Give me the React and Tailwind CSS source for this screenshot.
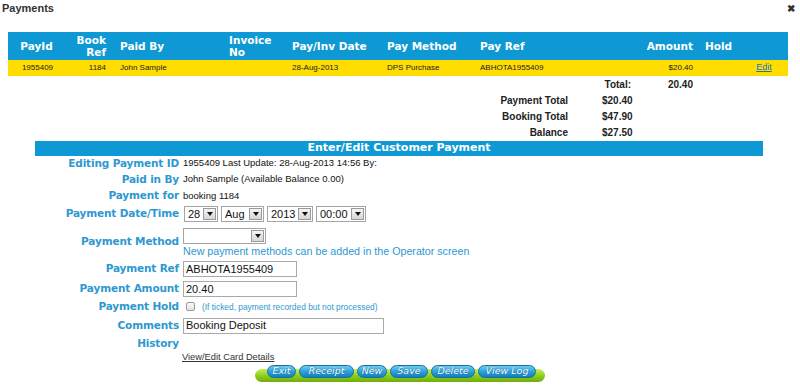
import React from 'react';

const cols = 'grid grid-cols-[57px_47px_109px_63px_95px_93px_168px_59px_41px_48px]';

const Select = ({ value, w }) => (
  <div className={`flex h-[16px] items-stretch border border-[#a5a5a5] bg-white ${w}`}>
    <div className="flex flex-1 items-center pl-[3px] text-[11px] text-[#111]">{value}</div>
    <div className="m-[1px] flex w-[13px] items-center justify-center border border-[#9a9a9a] bg-gradient-to-b from-[#f4f4f4] to-[#d6d6d6]">
      <span className="block h-0 w-0 border-x-[3.5px] border-t-[4px] border-x-transparent border-t-[#111]" />
    </div>
  </div>
);

const Input = ({ value, w }) => (
  <div className={`flex h-[16px] items-center border border-[#a9a9a9] bg-white pl-[2px] text-[11px] text-[#111] ${w}`}>
    {value}
  </div>
);

const Row = ({ label, h, children }) => (
  <div className={`flex items-center ${h}`}>
    <div className="w-[179px] shrink-0 text-right font-['DejaVu_Sans',sans-serif] text-[10.5px] font-bold tracking-[-0.15px] text-[#2e98d0]">
      {label}
    </div>
    <div className="ml-[4px] flex items-center">{children}</div>
  </div>
);

const buttons = [
  ['Exit', 'w-[29px]'],
  ['Receipt', 'w-[55px]'],
  ['New', 'w-[30px]'],
  ['Save', 'w-[38px]'],
  ['Delete', 'w-[44px]'],
  ['View Log', 'w-[58px]'],
];

export default function App() {
  return (
    <div className="relative h-[388px] w-[800px] overflow-hidden bg-white font-['Liberation_Sans',Arial,sans-serif] text-[#111]">
      {/* title */}
      <div className="flex h-[17px] items-center justify-between pl-[2px] pr-[5px]">
        <span className="text-[11px] font-bold text-[#333]">Payments</span>
        <span className="text-[10px] font-bold text-[#333]">✖</span>
      </div>

      {/* payments table */}
      <div className="mx-[8px] mt-[15px] w-[780px]">
        <div className={`${cols} h-[28px] items-center bg-[#0f99d4] font-['DejaVu_Sans',sans-serif] text-[10.5px] font-bold leading-[12px] text-white`}>
          <div className="text-center">PayId</div>
          <div className="pr-[6px] text-right">Book<br />Ref</div>
          <div className="pl-[8px]">Paid By</div>
          <div className="pl-[8px]">Invoice<br />No</div>
          <div className="pl-[8px]">Pay/Inv Date</div>
          <div className="pl-[8px]">Pay Method</div>
          <div className="pl-[8px]">Pay Ref</div>
          <div className="pr-[6px] text-right">Amount</div>
          <div className="pl-[6px]">Hold</div>
          <div />
        </div>
        <div className={`${cols} h-[16px] items-center bg-[#ffdd00] text-[8px] text-[#222]`}>
          <div className="pl-[2px] text-center">1955409</div>
          <div className="pr-[6px] text-right">1184</div>
          <div className="pl-[8px]">John Sample</div>
          <div className="pl-[8px]" />
          <div className="pl-[8px]">28-Aug-2013</div>
          <div className="pl-[8px]">DPS Purchase</div>
          <div className="pl-[8px]">ABHOTA1955409</div>
          <div className="pr-[6px] text-right">$20.40</div>
          <div />
          <div className="text-center text-[9px] text-[#1a73c8] underline">Edit</div>
        </div>
        <div className={`${cols} h-[16px] items-center text-[10px] font-bold text-[#222]`}>
          <div /><div /><div /><div /><div /><div />
          <div className="pr-[9px] text-right">Total:</div>
          <div className="pr-[6px] text-right">20.40</div>
          <div /><div />
        </div>
      </div>

      {/* totals */}
      <div className="text-[10px] font-bold text-[#222]">
        {[
          ['Payment Total', '$20.40'],
          ['Booking Total', '$47.90'],
          ['Balance', '$27.50'],
        ].map(([k, v]) => (
          <div key={k} className="flex h-[16px] items-center">
            <div className="w-[568px] text-right">{k}</div>
            <div className="pl-[34px]">{v}</div>
          </div>
        ))}
      </div>

      {/* edit form */}
      <div className="ml-[35px] mt-[1px] flex h-[15px] w-[728px] items-center justify-center bg-[#0f99d4] font-['DejaVu_Sans',sans-serif] text-[11px] font-bold text-white">
        Enter/Edit Customer Payment
      </div>

      <div className="text-[9.5px] text-[#111]">
        <Row label="Editing Payment ID" h="h-[15px]">
          1955409 Last Update: 28-Aug-2013 14:56 By:
        </Row>
        <Row label="Paid in By" h="h-[17px]">
          John Sample (Available Balance 0.00)
        </Row>
        <Row label="Payment for" h="h-[16px]">
          booking 1184
        </Row>
        <Row label="Payment Date/Time" h="h-[20px]">
          <div className="flex gap-[3px] pl-[1px]">
            <Select value="28" w="w-[34px]" />
            <Select value="Aug" w="w-[43px]" />
            <Select value="2013" w="w-[46px]" />
            <Select value="00:00" w="w-[50px]" />
          </div>
        </Row>
        <div className="flex h-[35px] items-center">
          <div className="w-[179px] shrink-0 text-right font-['DejaVu_Sans',sans-serif] text-[10.5px] font-bold tracking-[-0.15px] text-[#2e98d0]">
            Payment Method
          </div>
          <div className="ml-[4px] flex flex-col self-start pt-[4px]">
            <Select value="" w="w-[83px]" />
            <div className="text-[10.7px] leading-[14px] text-[#2e98d0]">
              New payment methods can be added in the Operator screen
            </div>
          </div>
        </div>
        <Row label="Payment Ref" h="h-[20px]">
          <Input value="ABHOTA1955409" w="w-[114px]" />
        </Row>
        <Row label="Payment Amount" h="h-[20px]">
          <Input value="20.40" w="w-[114px]" />
        </Row>
        <Row label="Payment Hold" h="h-[16px]">
          <span className="ml-[3px] block h-[9px] w-[9px] rounded-[2px] border border-[#9a9a9a] bg-gradient-to-b from-[#fafafa] to-[#e2e2e2]" />
          <span className="ml-[7px] text-[8.4px] text-[#2e98d0]">
            (If ticked, payment recorded but not processed)
          </span>
        </Row>
        <Row label="Comments" h="h-[21px]">
          <Input value="Booking Deposit" w="w-[201px]" />
        </Row>
        <Row label="History" h="h-[16px]" />
        <div className="flex h-[12px] items-center pl-[182px] text-[9.3px] text-[#333] underline">
          View/Edit Card Details
        </div>
      </div>

      {/* buttons */}
      <div className="ml-[255px] mt-[5px] flex h-[13px] w-[290px] rounded-full bg-gradient-to-b from-[#c8ee5a] via-[#8fcf1c] to-[#6fae0c] pl-[12px]">
        <div className="-mt-[4px] flex h-[13px] gap-[3px]">
          {buttons.map(([b, w]) => (
            <div
              key={b}
              className={`flex h-[13px] items-center justify-center rounded-full border border-[#1a6f9e] bg-gradient-to-b from-[#6ccdf4] via-[#2aa3dc] to-[#137fbd] font-['DejaVu_Sans',sans-serif] text-[9.5px] italic text-white [text-shadow:0_0_1px_#0a4f7a] ${w}`}
            >
              {b}
            </div>
          ))}
        </div>
      </div>
    </div>
  );
}
